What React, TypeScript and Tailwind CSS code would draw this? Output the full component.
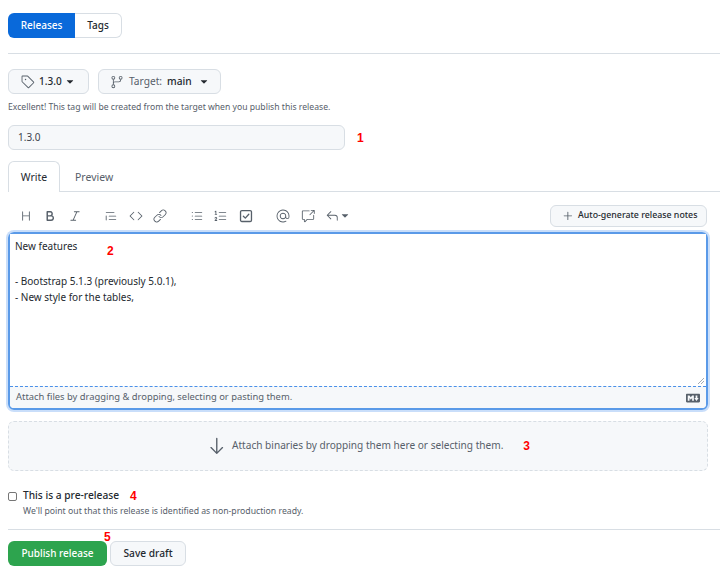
import React from 'react';
import {
  GoArrowDown,
  GoBold,
  GoCode,
  GoCrossReference,
  GoGitBranch,
  GoHeading,
  GoItalic,
  GoLink,
  GoListOrdered,
  GoListUnordered,
  GoMention,
  GoPlus,
  GoQuote,
  GoReply,
  GoTag,
  GoTriangleDown,
} from 'react-icons/go';

const Marker = ({ children, className = '' }: { children: React.ReactNode; className?: string }) => (
  <span className={`font-['Liberation_Sans',sans-serif] text-[12px] font-bold leading-none text-[#ff0000] ${className}`}>
    {children}
  </span>
);

const toolIcon = 'h-[14px] w-[14px] text-[#57606a]';

export default function App() {
  return (
    <div className="h-[578px] w-[720px] overflow-hidden bg-white pt-[13px] font-['Noto_Sans',sans-serif] text-[11px] text-[#24292f]">
      {/* Releases / Tags switch */}
      <div className="ml-2 flex h-[25px] w-[114px] font-medium">
        <div className="flex w-[67px] items-center justify-center rounded-l-md bg-[#0969da] text-[10px] text-white">Releases</div>
        <div className="flex flex-1 items-center justify-center rounded-r-md border border-l-0 border-[#d8dee4] text-[10px]">Tags</div>
      </div>
      <div className="ml-2 mt-[15px] h-px bg-[#d8dee4]" />

      {/* Tag and target pickers */}
      <div className="ml-2 mt-[15px] flex h-[25px] gap-[9px]">
        <div className="flex w-[81px] items-center rounded-md border border-[#d8dee4] bg-[#f6f8fa] pl-[12px] font-medium">
          <GoTag className="h-[14px] w-[14px] text-[#57606a]" />
          <span className="ml-[4px] text-[10px]">1.3.0</span>
          <GoTriangleDown className="ml-[2px] h-[12px] w-[12px]" />
        </div>
        <div className="flex w-[123px] items-center rounded-md border border-[#d8dee4] bg-[#f6f8fa] pl-[11px]">
          <GoGitBranch className="h-[14px] w-[14px] text-[#57606a]" />
          <span className="ml-[5px] text-[10.2px] text-[#57606a]">Target:</span>
          <span className="ml-[5px] text-[10.2px] font-medium">main</span>
          <GoTriangleDown className="ml-[6px] h-[12px] w-[12px]" />
        </div>
      </div>
      <p className="ml-2 mt-[6px] h-[15px] text-[8.65px] leading-[15px] text-[#57606a]">
        Excellent! This tag will be created from the target when you publish this release.
      </p>

      {/* Title */}
      <div className="ml-2 mt-[10px] flex items-center">
        <div className="flex h-[25px] w-[337px] items-center rounded-md border border-[#d8dee4] bg-[#f6f8fa] pl-[9px] text-[10px] text-[#3d444d]">
          1.3.0
        </div>
        <Marker className="ml-[12px]">1</Marker>
      </div>

      {/* Write / Preview */}
      <div className="ml-2 mt-[11px] flex h-[31px] border-b border-[#d8dee4] text-[10.5px]">
        <div className="-mb-px flex w-[52px] items-center justify-center rounded-t-md border border-b-0 border-[#d8dee4] bg-white pt-px">Write</div>
        <div className="ml-[15px] flex items-center pt-[3px] text-[#57606a]">Preview</div>
      </div>

      {/* Toolbar */}
      <div className="mx-3 mt-[13px] flex h-[22px] items-center pl-[7px]">
        <GoHeading className={toolIcon} />
        <GoBold className={`${toolIcon} ml-[10px]`} />
        <GoItalic className={`${toolIcon} ml-[11px]`} />
        <GoQuote className={`${toolIcon} ml-[22px]`} />
        <GoCode className={`${toolIcon} ml-[11px]`} />
        <GoLink className={`${toolIcon} ml-[10px]`} />
        <GoListUnordered className={`${toolIcon} ml-[23px]`} />
        <GoListOrdered className={`${toolIcon} ml-[10px]`} />
        <svg viewBox="0 0 16 16" className={`${toolIcon} ml-[11px]`} fill="none" stroke="currentColor" strokeWidth="1.5">
          <rect x="1.75" y="1.75" width="12.5" height="12.5" rx="1.5" />
          <path d="m5 8.2 2.2 2.2L11.2 6" strokeLinecap="round" strokeLinejoin="round" />
        </svg>
        <GoMention className={`${toolIcon} ml-[23px]`} />
        <GoCrossReference className={`${toolIcon} ml-[11px]`} />
        <GoReply className={`${toolIcon} ml-[10px]`} />
        <GoTriangleDown className="h-[12px] w-[12px] text-[#57606a]" />
        <div className="ml-auto mr-px flex h-[22px] w-[157px] shrink-0 items-center rounded-md border border-[#d8dee4] bg-[#f6f8fa] pl-[10px] font-medium">
          <GoPlus className="h-[14px] w-[14px] text-[#57606a]" />
          <span className="ml-[3px] whitespace-nowrap text-[8.8px]">Auto-generate release notes</span>
        </div>
      </div>

      {/* Editor */}
      <div className="ml-2 mr-3 mt-[5px] h-[178px] rounded-md border-2 border-[#5a9ae8] shadow-[0_0_0_2px_#c9defa]">
        <div className="relative h-[152px] bg-white pl-[5px] pt-[4px] text-[10px] leading-[16px]">
          <div className="flex">
            <span className="w-[92px]">New features</span>
            <Marker className="mt-[7px]">2</Marker>
          </div>
          <div className="h-4" />
          <div>- Bootstrap 5.1.3 (previously 5.0.1),</div>
          <div>- New style for the tables,</div>
          <svg viewBox="0 0 8 8" className="absolute bottom-px right-px h-2 w-2 text-[#8c959f]">
            <path d="M1 7 7 1M4 7 7 4" stroke="currentColor" strokeWidth="0.8" />
          </svg>
        </div>
        <div className="flex h-[22px] items-center justify-between rounded-b-[4px] border-t border-dashed border-[#4a90e8] bg-[#f6f8fa] pl-[6px] pr-[6px] text-[9.4px] text-[#57606a]">
          <span>Attach files by dragging &amp; dropping, selecting or pasting them.</span>
          <svg viewBox="0 0 16 16" className="h-[14px] w-[14px]" fill="currentColor">
            <path d="M14.85 3H1.15C.52 3 0 3.52 0 4.15v7.69C0 12.48.52 13 1.15 13h13.69c.64 0 1.15-.52 1.15-1.15v-7.7C16 3.52 15.48 3 14.85 3zM9 11H7V8L5.5 9.92 4 8v3H2V5h2l1.5 2L7 5h2v6zm2.99.5L9.5 8H11V5h2v3h1.5l-2.51 3.5z" />
          </svg>
        </div>
      </div>

      {/* Binaries */}
      <div className="ml-2 mr-3 mt-[11px] flex h-[50px] items-center rounded-md border border-dashed border-[#d8dee4] bg-[#f6f8fa] pl-[197px]">
        <GoArrowDown className="h-[22px] w-[22px] text-[#57606a]" />
        <span className="ml-[4px] text-[10.1px] text-[#57606a]">Attach binaries by dropping them here or selecting them.</span>
        <Marker className="ml-[20px]">3</Marker>
      </div>

      {/* Pre-release */}
      <div className="ml-2 mt-[17px] flex h-[16px] items-center">
        <input type="checkbox" className="h-[9px] w-[9px] appearance-none rounded-[2px] border border-[#767676] bg-white" />
        <span className="ml-[6px] text-[10.2px] font-medium">This is a pre-release</span>
        <Marker className="ml-[11px]">4</Marker>
      </div>
      <p className="ml-[23px] h-[14px] text-[8.7px] leading-[14px] text-[#57606a]">
        We'll point out that this release is identified as non-production ready.
      </p>
      <div className="ml-2 mt-[11px] h-px bg-[#d8dee4]" />

      {/* Actions */}
      <div className="relative ml-2 mt-[11px] flex h-[25px] gap-[3px] font-medium">
        <div className="flex w-[99px] items-center justify-center rounded-md bg-[#2da44e] text-[10px] text-white">Publish release</div>
        <div className="flex w-[76px] items-center justify-center rounded-md border border-[#d8dee4] bg-[#f6f8fa] text-[10.2px]">Save draft</div>
        <Marker className="absolute -top-[10px] left-[96px]">5</Marker>
      </div>
    </div>
  );
}
